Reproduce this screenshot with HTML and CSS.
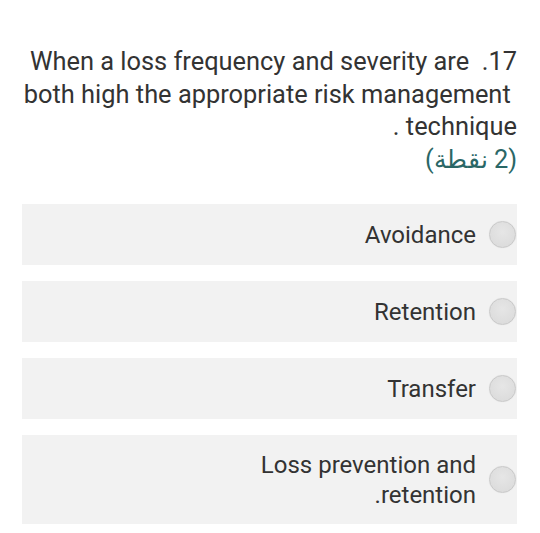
FILE: index.html
```html
<!DOCTYPE html>
<html lang="en">
  <head>
    <meta charset="UTF-8" />
    <meta name="viewport" content="width=device-width, initial-scale=1.0" />
    <title>Question 17</title>
    <link rel="stylesheet" href="styles.css">
  </head>
  <body>
    <div class="quiz">
      <!-- Question text -->
      <div class="question">
        <div class="line">When a loss frequency and severity are &nbsp;.17</div>
        <div class="line">both high the appropriate risk management&nbsp;</div>
        <div class="line">. technique</div>
        <div class="points" dir="rtl">(2 نقطة)</div>
      </div>

      <!-- Answer options -->
      <div class="options">
        <label class="option">
          <span class="option-text">Avoidance</span>
          <span class="radio"></span>
        </label>
        <label class="option">
          <span class="option-text">Retention</span>
          <span class="radio"></span>
        </label>
        <label class="option">
          <span class="option-text">Transfer</span>
          <span class="radio"></span>
        </label>
        <label class="option tall">
          <span class="option-text">Loss prevention and<br />.retention</span>
          <span class="radio"></span>
        </label>
      </div>
    </div>
  </body>
</html>
```

FILE: styles.css
```css
body {
  font-family: Roboto, "Liberation Sans", sans-serif;
  background-color: white;
  color: #333;
  margin: 0;
  padding: 0;
}

.quiz {
  padding: 45px 23px 0 22px;
}

.question {
  text-align: right;
  font-size: 25.4px;
  line-height: 32.5px;
  margin-bottom: 29px;
}

.points {
  text-align: right;
  color: #2a6766;
}

.options {
  display: flex;
  flex-direction: column;
  gap: 16px;
}

.option {
  display: flex;
  justify-content: flex-end;
  align-items: center;
  gap: 13px;
  height: 61px;
  padding-right: 1px;
  background-color: #f2f2f2;
  cursor: pointer;
}

.option.tall {
  height: 89px;
}

.option-text {
  text-align: right;
  font-size: 24px;
  line-height: 30px;
  color: #333;
}

.radio {
  width: 25px;
  height: 25px;
  border-radius: 50%;
  border: 1px solid #c9c9c9;
  background: radial-gradient(circle at 50% 40%, #e6e6e6, #d9d9d9);
  box-shadow: 0 0 1px rgba(0, 0, 0, 0.1);
}
```
